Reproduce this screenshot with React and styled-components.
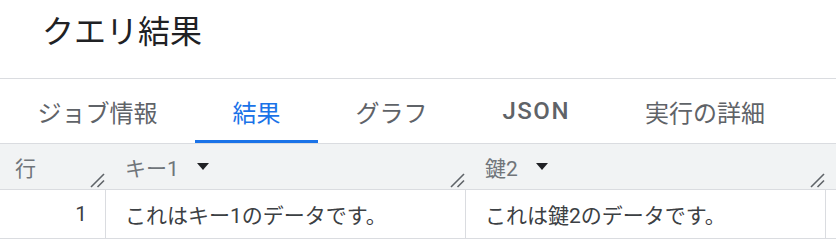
import styled, { createGlobalStyle } from "styled-components";

const GlobalStyle = createGlobalStyle`
  * { box-sizing: border-box; }
  body {
    margin: 0;
    background: #fff;
    font-family: Roboto, "Noto Sans CJK JP", sans-serif;
    color: #202124;
  }
`

const Page = styled.div`
  width: 836px;
`

const TitleBar = styled.header`
  height: 79px;
  padding: 16px 0 0 42px;
  border-bottom: 1px solid #dadce0;
`

const Title = styled.h1`
  margin: 0;
  font-size: 32px;
  line-height: 32px;
  font-weight: 400;
  color: #202124;
`

const TabBar = styled.nav`
  display: flex;
  height: 65px;
  border-bottom: 1px solid #dadce0;
`

const Tab = styled.div`
  display: flex;
  align-items: center;
  padding: 3px 37.5px 0;
  font-size: 24px;
  font-weight: ${p => (p.$latin ? 500 : 400)};
  letter-spacing: ${p => (p.$latin ? "1.5px" : "0")};
  color: ${p => (p.$active ? "#1a73e8" : "#5f6368")};
  border-bottom: 3px solid ${p => (p.$active ? "#1a73e8" : "transparent")};
  cursor: pointer;
`

const Grid = styled.div`
  display: grid;
  grid-template-columns: 106px 360px 360px 1fr;
`

const HeadCell = styled.div`
  display: flex;
  align-items: center;
  height: 46px;
  padding-left: ${p => (p.$num ? "15px" : "19px")};
  padding-right: 1px;
  background: #f1f3f4;
  border-bottom: 1px solid #dadce0;
  font-size: 21px;
  color: #70757a;
`

const SortArrow = styled.svg`
  width: 12px;
  height: 7px;
  margin-left: 18px;
  fill: #202124;
`

const Handle = styled.svg`
  width: 15px;
  height: 15px;
  margin-left: auto;
  align-self: flex-end;
  margin-bottom: 1px;
  stroke: #5f6368;
  stroke-width: 1.6;
`

const Cell = styled.div`
  display: flex;
  align-items: center;
  justify-content: ${p => (p.$num ? "flex-end" : "flex-start")};
  height: 49px;
  padding: ${p => (p.$num ? "0 18px 0 0" : "0 19px")};
  border-bottom: 1px solid #dadce0;
  border-right: ${p => (p.$last ? "none" : "1px solid #dadce0")};
  font-size: 21px;
  color: #3c4043;
`

const ResizeHandle = () => (
  <Handle viewBox="0 0 15 15">
    <line x1="1" y1="14" x2="14" y2="1" />
    <line x1="7.5" y1="14" x2="14" y2="7.5" />
  </Handle>
)

const Arrow = () => (
  <SortArrow viewBox="0 0 12 7">
    <path d="M0 0 L12 0 L6 7 Z" />
  </SortArrow>
)

const tabs = ["ジョブ情報", "結果", "グラフ", "JSON", "実行の詳細"]

const App = () => {
  return (
    <Page>
      <GlobalStyle />
      <TitleBar>
        <Title>クエリ結果</Title>
      </TitleBar>
      <TabBar>
        {tabs.map(t => (
          <Tab key={t} $active={t === "結果"} $latin={t === "JSON"}>{t}</Tab>
        ))}
      </TabBar>
      <Grid>
        <HeadCell $num>
          行
          <ResizeHandle />
        </HeadCell>
        <HeadCell>
          キー1
          <Arrow />
          <ResizeHandle />
        </HeadCell>
        <HeadCell>
          鍵2
          <Arrow />
          <ResizeHandle />
        </HeadCell>
        <HeadCell />

        <Cell $num>1</Cell>
        <Cell>これはキー1のデータです。</Cell>
        <Cell>これは鍵2のデータです。</Cell>
        <Cell $last />
      </Grid>
    </Page>
  );
}

export default App;
